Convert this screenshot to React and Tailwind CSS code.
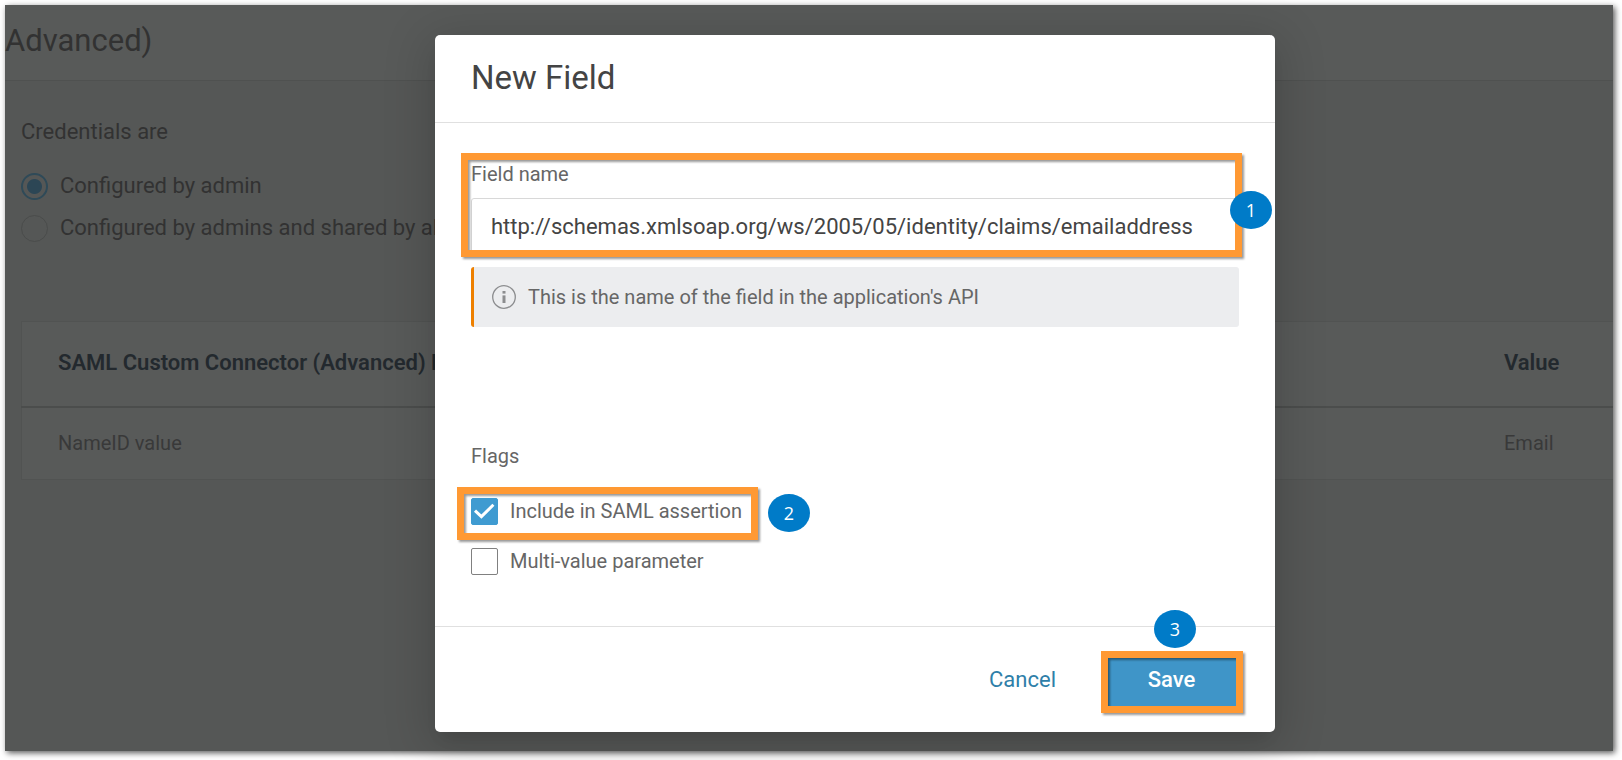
import { useState } from 'react';

const credentialOptions = [
  { id: 'admin', label: 'Configured by admin' },
  { id: 'shared', label: 'Configured by admins and shared by all users' },
];

const parameters = [{ name: 'NameID value', value: 'Email' }];

const Highlight = ({ className }) => (
  <div
    aria-hidden="true"
    className={`absolute pointer-events-none border-[7px] border-[#ff9933] drop-shadow-[2px_2px_1px_rgba(0,0,0,0.4)] ${className}`}
  />
);

const StepBadge = ({ number, className }) => (
  <span
    className={`absolute flex items-center justify-center w-[42px] h-[38px] rounded-[50%] bg-[#007bc8] text-white text-lg leading-none font-['Open_Sans',sans-serif] ${className}`}
  >
    {number}
  </span>
);

const InfoIcon = () => (
  <svg viewBox="0 0 24 24" className="w-6 h-6 shrink-0" fill="none" aria-hidden="true">
    <circle cx="12" cy="12" r="11.3" stroke="#8c8d8f" strokeWidth="1.3" />
    <rect x="10.5" y="6" width="3" height="2.6" fill="#8c8d8f" />
    <rect x="10.5" y="10.4" width="3" height="7.6" fill="#8c8d8f" />
  </svg>
);

const Checkbox = ({ label, checked, onChange }) => (
  <label className="flex items-center gap-3 text-xl leading-7 text-[#666666]">
    <span className="relative flex w-[27px] h-[27px]">
      <input
        type="checkbox"
        checked={checked}
        onChange={(e) => onChange(e.target.checked)}
        className="peer appearance-none w-full h-full rounded-xs border border-[#808080] bg-white checked:border-[#3f9bd1] checked:bg-[#3f9bd1]"
      />
      <svg
        viewBox="0 0 27 27"
        fill="none"
        stroke="white"
        strokeWidth="3"
        aria-hidden="true"
        className="absolute inset-0 pointer-events-none hidden peer-checked:block"
      >
        <path d="M4 12.6 L10.4 18.6 L22.4 6.8" />
      </svg>
    </span>
    {label}
  </label>
);

const ParametersPage = () => {
  const [credentials, setCredentials] = useState('admin');

  return (
    <div className="flex-1 bg-[#555756] text-[#323232]">
      <header className="h-[76px] pb-1 bg-[#585a59] border-b border-[#4f5150] flex items-center">
        <h1 className="text-[31px] leading-10">Advanced)</h1>
      </header>

      <main className="pl-4 pt-[37px]">
        <fieldset className="text-[22px] leading-7">
          <legend className="mb-[26px]">Credentials are</legend>
          <div className="flex flex-col gap-[14px]">
            {credentialOptions.map((option) => (
              <label key={option.id} className="flex items-center gap-3 whitespace-nowrap">
                <input
                  type="radio"
                  name="credentials"
                  checked={credentials === option.id}
                  onChange={() => setCredentials(option.id)}
                  className="appearance-none w-[27px] h-[27px] shrink-0 rounded-full border border-[#4a4c4b] checked:border-2 checked:border-[#2f4a58] checked:bg-[radial-gradient(circle,#2c4655_7px,transparent_8px)]"
                />
                {option.label}
              </label>
            ))}
          </div>
        </fieldset>

        <table className="mt-[79px] w-full table-fixed border-l border-y border-[#515352] bg-[#585a59] text-left text-xl">
          <thead>
            <tr className="h-[85px] border-b-2 border-[#4b4d4c] text-[22px] text-[#23292e]">
              <th className="pl-9 font-semibold whitespace-nowrap">SAML Custom Connector (Advanced) Field</th>
              <th className="w-[109px] font-semibold">Value</th>
            </tr>
          </thead>
          <tbody>
            {parameters.map((parameter) => (
              <tr key={parameter.name} className="h-[73px] text-[#393939]">
                <td className="pl-9">{parameter.name}</td>
                <td>{parameter.value}</td>
              </tr>
            ))}
          </tbody>
        </table>
      </main>
    </div>
  );
};

const NewFieldDialog = () => {
  const [fieldName, setFieldName] = useState(
    'http://schemas.xmlsoap.org/ws/2005/05/identity/claims/emailaddress'
  );
  const [includeInSaml, setIncludeInSaml] = useState(true);
  const [multiValue, setMultiValue] = useState(false);

  return (
    <div
      role="dialog"
      aria-labelledby="dialog-title"
      className="w-full max-w-[840px] bg-white rounded-[5px] shadow-[0_11px_15px_-7px_rgba(0,0,0,0.1),0_9px_46px_8px_rgba(0,0,0,0.15)]"
    >
      <div className="px-9 pt-[23px] pb-6 border-b border-[#e0e0e0]">
        <h2 id="dialog-title" className="text-[33px] leading-10 text-[#444444]">
          New Field
        </h2>
      </div>

      <div className="px-9 pt-[37px] pb-[51px]">
        <div className="relative">
          <label htmlFor="field-name" className="block text-xl leading-7 text-[#666666]">
            Field name
          </label>
          <input
            id="field-name"
            type="text"
            value={fieldName}
            onChange={(e) => setFieldName(e.target.value)}
            className="mt-[10px] block w-full h-14 px-[19px] border border-[#d8d8d8] rounded-[3px] text-[22px] text-[#444444] outline-none"
          />
          <Highlight className="-top-[7px] -bottom-[3px] -left-[10px] -right-[3px]" />
          <StepBadge number={1} className="top-[31px] -right-[33px]" />
        </div>

        <div className="mt-[13px] flex items-center gap-3 h-[60px] pl-[18px] rounded-[3px] border-l-3 border-[#ee8000] bg-[#ecedef] text-xl text-[#666666]">
          <InfoIcon />
          This is the name of the field in the application's API
        </div>

        <fieldset className="mt-[115px]">
          <legend className="mb-[27px] text-xl leading-7 text-[#666666]">Flags</legend>
          <div className="flex flex-col items-start gap-[22px]">
            <div className="relative">
              <Checkbox label="Include in SAML assertion" checked={includeInSaml} onChange={setIncludeInSaml} />
              <Highlight className="-top-[10px] -bottom-[15px] -left-[14px] -right-4" />
              <StepBadge number={2} className="-top-[3px] left-full ml-[26px]" />
            </div>
            <Checkbox label="Multi-value parameter" checked={multiValue} onChange={setMultiValue} />
          </div>
        </fieldset>
      </div>

      <div className="flex items-center justify-end gap-12 h-[106px] px-9 border-t border-[#e0e0e0] text-[22px]">
        <button type="button" className="text-[#2f7fa9]">
          Cancel
        </button>
        <div className="relative">
          <button type="button" className="block w-[135px] h-14 rounded-xs bg-[#3f95c8] text-white font-medium">
            Save
          </button>
          <Highlight className="-top-px -bottom-[5px] -left-[3px] -right-1" />
          <StepBadge number={3} className="bottom-full mb-1 right-[43px]" />
        </div>
      </div>
    </div>
  );
};

const App = () => (
  <div className="min-h-screen flex flex-col bg-white pt-[5px] pl-[5px] pr-[9px] pb-[9px] font-[Roboto,sans-serif]">
    <div className="relative flex-1 flex flex-col shadow-[2px_2px_6px_0px_rgba(0,0,0,0.65)]">
      <ParametersPage />
      <div className="absolute inset-0 flex items-start justify-center pt-[30px] pl-[92px]">
        <NewFieldDialog />
      </div>
    </div>
  </div>
);

export default App;
